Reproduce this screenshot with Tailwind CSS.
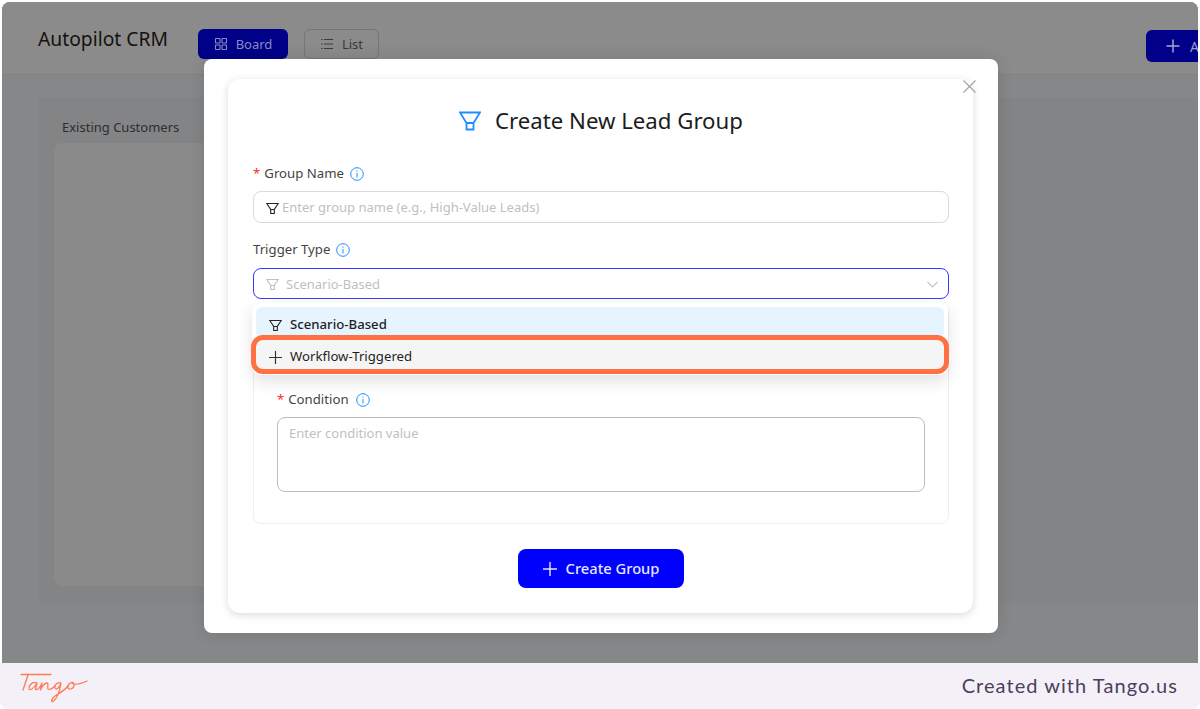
<!DOCTYPE html>
<html lang="en">
<head>
    <meta charset="UTF-8">
    <title>Autopilot CRM</title>
    <script src="https://cdn.jsdelivr.net/npm/@tailwindcss/browser@4"></script>
</head>
<body class="bg-white h-[709px] w-[1200px] overflow-hidden relative font-['Noto_Sans','Open_Sans',sans-serif]">
    <!-- page behind the dialog -->
    <div class="ml-[2px] mt-[2px] w-[1196px] h-[661px] bg-[#868788] rounded-t-lg overflow-hidden flex flex-col">
        <header class="h-[73px] shrink-0 bg-[#8b8b8b] border-b border-[#808183] flex items-start pl-[36px] pt-[27px]">
            <h1 class="text-[19.3px] leading-[20px] text-[#15120e] w-[160px] whitespace-nowrap">Autopilot CRM</h1>
            <div class="h-[30px] w-[90px] bg-[#000088] rounded-md flex items-center justify-center gap-2 text-[13px] text-[#8b8bc4]">
                <svg class="w-[14px] h-[14px]" viewBox="0 0 14 14" fill="none" stroke="currentColor" stroke-width="1.1"><rect x="1.5" y="1.5" width="4.5" height="4.5" rx=".5"/><rect x="8" y="1.5" width="4.5" height="4.5" rx=".5"/><rect x="1.5" y="8" width="4.5" height="4.5" rx=".5"/><rect x="8" y="8" width="4.5" height="4.5" rx=".5"/></svg>
                <span class="translate-y-[1px]">Board</span>
            </div>
            <div class="ml-4 h-[30px] w-[75px] border border-[#757575] rounded-md flex items-center justify-center gap-2 text-[13px] text-[#3a3a3a]">
                <svg class="w-[14px] h-[14px]" viewBox="0 0 14 14" fill="none" stroke="currentColor" stroke-width="1.1"><path d="M4 2.500h9M4 7h9M4 11.500h9M1 2.500h1.400M1 7h1.400M1 11.500h1.400"/></svg>
                <span class="translate-y-[1px]">List</span>
            </div>
            <div class="ml-auto h-[32px] w-[52px] bg-[#000088] rounded-l-md flex items-center pl-[19px] gap-[9px] text-[14px] text-[#9a9ac4] mt-[1px]">
                <svg class="w-[16px] h-[16px] shrink-0" viewBox="0 0 16 16" fill="none" stroke="#a6a6c8" stroke-width="1.500"><path d="M8 1.500v13M1.500 8h13"/></svg>
                A
            </div>
        </header>
        <main class="flex-1 pt-[23px] pl-[36px] pb-[60px]">
            <div class="h-[505px] bg-[#838485] pl-[16px] pt-[20px]">
                <p class="pl-[8px] text-[13px] leading-[18px] text-[#2e2e2e]">Existing Customers</p>
                <div class="w-[160px] h-[443px] mt-[7px] bg-[#8a8a8a] rounded-lg"></div>
            </div>
        </main>
    </div>

    <!-- footer -->
    <footer class="h-[46px] bg-[#f3f1f7] rounded-b-lg flex items-center justify-between pl-[20px] pr-[22px]">
        <svg class="w-[70px] h-[36px]" viewBox="0 0 70 36" fill="none" stroke="#ff7a55" stroke-width="1.300" stroke-linecap="round" stroke-linejoin="round">
            <path d="M1 6.500h30M8 7L3 22"/>
            <path d="M17 15C13 13 9 17 9 20C9 23 13 22 17 15L15.500 21C17 23 20 20 22 15L20.500 22C22 18 25 15 27 15C29 15 27 20 28 21C30 22 33 20 35 18"/>
            <path d="M41 15C37 14 34 17 35 20C36 22 39 21 41 15C40 22 38 30 33 33.500C31 34.500 31 31 35 28C40 25 45 22 48 18"/>
            <path d="M53 14.500C50 14 47 17 48 20C49 22 54 21 54 17C54 15 52 14 52 15C54 17 60 16 67 13"/>
        </svg>
        <span class="text-[20px] leading-[20px] tracking-[1.05px] text-[#4a3f5c] font-['Lato',sans-serif] -translate-y-[1px]">Created with Tango.us</span>
    </footer>

    <!-- dialog -->
    <div class="absolute left-[204px] top-[59px] w-[794px] h-[574px] bg-white rounded-lg pl-[24px] pr-[25px] pt-[20px] shadow-[0_0_16px_rgba(0,0,0,0.12)]">
        <div class="relative h-[534px] rounded-xl bg-white shadow-[0_2px_8px_rgba(0,0,0,0.15)] pt-[27px] pl-[25px] pr-[24px]">
            <svg class="absolute right-[-3px] top-[1px] w-[13px] h-[13px]" viewBox="0 0 13 13" stroke="#a3a3a3" stroke-width="1.200"><path d="M.5.500l12 12M12.500.500l-12 12"/></svg>

            <h2 class="flex items-center justify-center gap-[14px] text-[22.2px] leading-[30px] text-[#1c1c1c]">
                <svg class="w-[22px] h-[20px]" viewBox="0 0 22 20" fill="none" stroke="#1f8fff" stroke-width="1.800"><path d="M1 1.500h20L14.500 12v6.500h-7V12zM7.500 12h7"/></svg>
                Create New Lead Group
            </h2>

            <label class="mt-[26px] pt-[3px] flex items-center h-[20px] text-[13.2px] text-[#444]"><span class="text-[#ff2a2a] mr-[4px]">*</span>Group Name
                <svg class="ml-[6px] w-[14px] h-[14px]" viewBox="0 0 14 14" fill="none" stroke="#1f8fff"><circle cx="7" cy="7" r="6.300"/><path d="M7 6v4.500M7 3.500v1.200"/></svg>
            </label>
            <div class="mt-[9px] pt-[2px] h-[32px] border border-[#d9d9d9] rounded-lg flex items-center pl-[12px] text-[13px] text-[#bfbfbf]">
                <svg class="w-[13px] h-[13px] mr-[3px]" viewBox="0 0 13 13" fill="none" stroke="#222" stroke-width="1.100"><path d="M.8 1.500h11.400L8.300 7.500v4H4.700v-4zM4.700 7.500h3.600"/></svg>
                Enter group name (e.g., High-Value Leads)
            </div>

            <label class="mt-[16px] pt-[2px] flex items-center h-[20px] text-[13.2px] text-[#444]">Trigger Type
                <svg class="ml-[6px] w-[14px] h-[14px]" viewBox="0 0 14 14" fill="none" stroke="#1f8fff"><circle cx="7" cy="7" r="6.300"/><path d="M7 6v4.500M7 3.500v1.200"/></svg>
            </label>
            <div class="mt-[9px] pt-[2px] h-[31px] border border-[#3a3aff] rounded-lg flex items-center pl-[12px] pr-[10px] text-[13px] text-[#bfbfbf]">
                <svg class="w-[13px] h-[13px] mr-[7px]" viewBox="0 0 13 13" fill="none" stroke="#bfbfbf" stroke-width="1.100"><path d="M.8 1.500h11.400L8.300 7.500v4H4.700v-4zM4.700 7.500h3.600"/></svg>
                Scenario-Based
                <svg class="ml-auto w-[11px] h-[7px]" viewBox="0 0 11 7" fill="none" stroke="#c4c4c4" stroke-width="1.200"><path d="M.5 1l5 5 5-5"/></svg>
            </div>

            <div class="mt-[6px] h-[219px] border border-[#efefef] rounded-lg px-[23px] pt-[83px]">
                <label class="pt-[2px] flex items-center h-[20px] text-[13.2px] text-[#444]"><span class="text-[#ff2a2a] mr-[4px]">*</span>Condition
                    <svg class="ml-[7px] w-[14px] h-[14px]" viewBox="0 0 14 14" fill="none" stroke="#1f8fff"><circle cx="7" cy="7" r="6.300"/><path d="M7 6v4.500M7 3.500v1.200"/></svg>
                </label>
                <div class="mt-[8px] h-[75px] border border-[#bdbdbd] rounded-lg pl-[11px] pr-[12px] pt-[6px] text-[13px] text-[#bfbfbf]">Enter condition value</div>
            </div>

            <div class="mt-[25px] flex justify-center">
                <button class="w-[166px] h-[39px] bg-[#0000ff] rounded-lg flex items-center justify-center gap-[9px] text-[14.7px] font-medium text-[#e6e6ff]">
                    <svg class="w-[14px] h-[14px]" viewBox="0 0 14 14" fill="none" stroke="#e6e6ff" stroke-width="1.400"><path d="M7 0v14M0 7h14"/></svg>
                    Create Group
                </button>
            </div>

            <!-- open dropdown -->
            <div class="absolute left-[24px] top-[224px] w-[696px] h-[72px] bg-white rounded-lg shadow-[0_6px_16px_rgba(0,0,0,0.12)] p-[4px] text-[13.2px] text-[#1f1f1f]">
                <div class="h-[32px] pt-[4px] bg-[#e6f4ff] rounded-md flex items-center pl-[13px] gap-[8px] font-medium">
                    <svg class="w-[13px] h-[13px]" viewBox="0 0 13 13" fill="none" stroke="#222" stroke-width="1.100"><path d="M.8 1.500h11.400L8.300 7.500v4H4.700v-4zM4.700 7.500h3.600"/></svg>
                    Scenario-Based
                </div>
                <div class="h-[32px] pt-[4px] bg-[#f5f5f5] rounded-md flex items-center pl-[13px] gap-[8px]">
                    <svg class="w-[13px] h-[13px]" viewBox="0 0 13 13" fill="none" stroke="#333" stroke-width="1.200"><path d="M6.500 0v13M0 6.500h13"/></svg>
                    Workflow-Triggered
                </div>
            </div>
            <!-- tango highlight -->
            <div class="absolute left-[23px] top-[256px] w-[698px] h-[39px] border-[5.5px] border-[#ff7043] rounded-[12px]"></div>
        </div>
    </div>
</body>
</html>
